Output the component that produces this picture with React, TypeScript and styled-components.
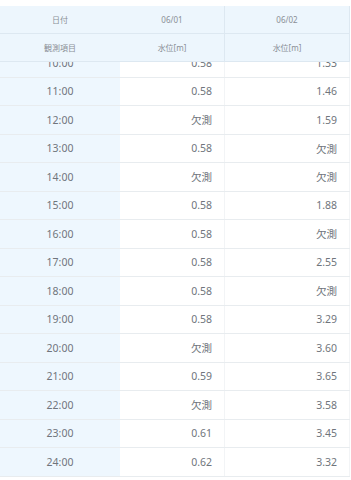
import React, {useLayoutEffect, useRef} from 'react';
import styled, {createGlobalStyle} from 'styled-components';

const GlobalStyle = createGlobalStyle`
    html, body {
        margin: 0;
        padding: 0;
        background: #ffffff;
    }
    body {
        font-family: "Noto Sans", "Noto Sans CJK JP", sans-serif;
    }
`

const Wrapper = styled.div`
    width: 351px;
    height: 480px;
    padding-top: 6px;
    box-sizing: border-box;
    background: #ffffff;
    display: flex;
    flex-direction: column;
    overflow: hidden;
`

const HeadRow = styled.div`
    display: grid;
    grid-template-columns: 120px 105px 124px;
    width: 350px;
    height: 28px;
    box-sizing: border-box;
    background: #edf6fd;
    border-bottom: 1px solid #dde8f1;
    border-right: 1px solid #dde8f1;
`

const HeadCell = styled.div<{$first?: boolean}>`
    display: flex;
    align-items: center;
    justify-content: center;
    color: #8a8f96;
    font-size: 8px;
    border-right: ${p => (p.$first ? 'none' : '1px solid #dde8f1')};
    &:last-child {
        border-right: none;
    }
`

const Body = styled.div`
    width: 350px;
    height: 415px;
    overflow: hidden;
    display: flex;
    flex-direction: column;
`

const BodyRow = styled.div`
    display: grid;
    grid-template-columns: 120px 105px 125px;
    flex: 0 0 28.5px;
    box-sizing: border-box;
    border-bottom: 1px solid #e8ecef;
`

const LabelCell = styled.div`
    display: flex;
    align-items: center;
    justify-content: center;
    background: #eef7fe;
    color: #70757c;
    font-size: 10.5px;
`

const ValueCell = styled.div`
    display: flex;
    align-items: center;
    justify-content: flex-end;
    padding-right: 12px;
    background: #ffffff;
    color: #70757c;
    font-size: 10.5px;
    border-right: 1px solid #f2f4f6;
`

type Row = {
    time: string;
    day1: string;
    day2: string;
}

const rows: Row[] = [
    {time: '10:00', day1: '0.58', day2: '1.33'},
    {time: '11:00', day1: '0.58', day2: '1.46'},
    {time: '12:00', day1: '欠測', day2: '1.59'},
    {time: '13:00', day1: '0.58', day2: '欠測'},
    {time: '14:00', day1: '欠測', day2: '欠測'},
    {time: '15:00', day1: '0.58', day2: '1.88'},
    {time: '16:00', day1: '0.58', day2: '欠測'},
    {time: '17:00', day1: '0.58', day2: '2.55'},
    {time: '18:00', day1: '0.58', day2: '欠測'},
    {time: '19:00', day1: '0.58', day2: '3.29'},
    {time: '20:00', day1: '欠測', day2: '3.60'},
    {time: '21:00', day1: '0.59', day2: '3.65'},
    {time: '22:00', day1: '欠測', day2: '3.58'},
    {time: '23:00', day1: '0.61', day2: '3.45'},
    {time: '24:00', day1: '0.62', day2: '3.32'},
]

const WaterLevelTable = () => {
    const body = useRef<HTMLDivElement>(null);

    // the list is scrolled to its end
    useLayoutEffect(() => {
        const el = body.current;
        if (!el) return;
        el.scrollTop = el.scrollHeight - el.clientHeight;
    }, []);

    return (
        <>
            <HeadRow>
                <HeadCell $first>日付</HeadCell>
                <HeadCell>06/01</HeadCell>
                <HeadCell>06/02</HeadCell>
            </HeadRow>
            <HeadRow>
                <HeadCell $first>観測項目</HeadCell>
                <HeadCell>水位[m]</HeadCell>
                <HeadCell>水位[m]</HeadCell>
            </HeadRow>
            <Body ref={body}>
                {rows.map(r => (
                    <BodyRow key={r.time}>
                        <LabelCell>{r.time}</LabelCell>
                        <ValueCell>{r.day1}</ValueCell>
                        <ValueCell>{r.day2}</ValueCell>
                    </BodyRow>
                ))}
            </Body>
        </>
    )
};

const App = () => {
    return (
        <Wrapper>
            <GlobalStyle />
            <WaterLevelTable />
        </Wrapper>
    )
};

export default App;
